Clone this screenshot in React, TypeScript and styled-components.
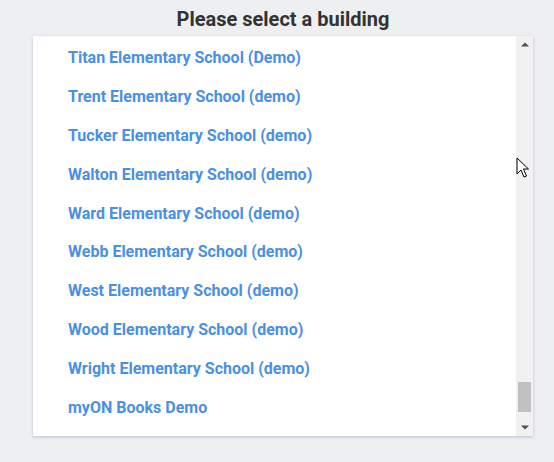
import React from 'react';
import styled, { createGlobalStyle } from 'styled-components';

const GlobalStyle = createGlobalStyle`
  html, body {
    margin: 0;
    padding: 0;
    background: #eeeff1;
    font-family: Roboto, "Liberation Sans", Arial, sans-serif;
  }
`;

const Page = styled.div`
  position: relative;
  width: 554px;
  height: 462px;
  box-sizing: border-box;
  padding-left: 12px;
  display: flex;
  flex-direction: column;
  align-items: center;
  overflow: hidden;
`;

const Title = styled.h1`
  margin: 7px 0 0;
  height: 29px;
  font-size: 20px;
  line-height: 24px;
  font-weight: 700;
  color: #333333;
  text-align: center;
`;

const Panel = styled.div`
  width: 500px;
  height: 400px;
  display: flex;
  background: #ffffff;
  box-shadow: 0 1px 3px rgba(90, 110, 160, 0.35);
`;

const List = styled.ul`
  flex: 1;
  margin: 0;
  padding: 2px 0 0 35px;
  list-style: none;
  overflow: hidden;
`;

const Item = styled.li`
  height: 38.9px;
  display: flex;
  align-items: center;
  font-size: 16px;
  font-weight: 700;
  color: #4a8fe6;
  cursor: pointer;
`;

const Scrollbar = styled.div`
  width: 17px;
  display: flex;
  flex-direction: column;
  background: #f1f1f1;
`;

const Arrow = styled.div`
  height: 17px;
  display: flex;
  align-items: center;
  justify-content: center;
`;

const Track = styled.div`
  flex: 1;
  padding: 0 2px;
`;

const Thumb = styled.div`
  height: 30px;
  background: #c1c1c1;
`;

const Cursor = styled.svg`
  position: absolute;
  left: 516px;
  top: 157px;
`;

const buildings = [
  'Titan Elementary School (Demo)',
  'Trent Elementary School (demo)',
  'Tucker Elementary School (demo)',
  'Walton Elementary School (demo)',
  'Ward Elementary School (demo)',
  'Webb Elementary School (demo)',
  'West Elementary School (demo)',
  'Wood Elementary School (demo)',
  'Wright Elementary School (demo)',
  'myON Books Demo',
];

// scroll position of the list, as the thumb offset in the track
const thumbOffset = 329;

const App: React.FC = () => {
  return (
    <>
      <GlobalStyle />
      <Page>
        <Title>Please select a building</Title>
        <Panel>
          <List>
            {buildings.map((name) => (
              <Item key={name}>{name}</Item>
            ))}
          </List>
          <Scrollbar>
            <Arrow>
              <svg width="8" height="5" viewBox="0 0 8 5">
                <path d="M0 4.5 L4 0.5 L8 4.5 Z" fill="#505050" />
              </svg>
            </Arrow>
            <Track>
              <Thumb style={{ marginTop: thumbOffset }} />
            </Track>
            <Arrow>
              <svg width="8" height="5" viewBox="0 0 8 5">
                <path d="M0 0.5 L4 4.5 L8 0.5 Z" fill="#505050" />
              </svg>
            </Arrow>
          </Scrollbar>
        </Panel>
        <Cursor width="14" height="22" viewBox="0 0 14 22">
          <path
            d="M1 1 L1 17 L5 13 L8 20 L10.5 19 L7.5 12 L12.5 12 Z"
            fill="#ffffff"
            stroke="#000000"
            strokeWidth="1"
            strokeLinejoin="miter"
          />
        </Cursor>
      </Page>
    </>
  );
};

export default App;
